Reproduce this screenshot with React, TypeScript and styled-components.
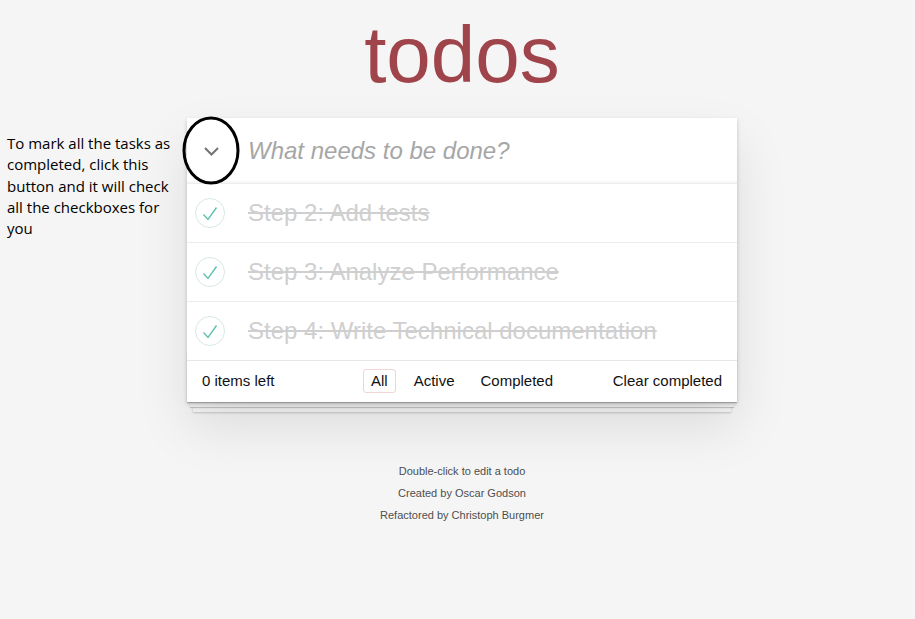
import React from 'react';
import styled, { createGlobalStyle } from 'styled-components';

const GlobalStyle = createGlobalStyle`
  body {
    margin: 0;
    background: #f5f5f5;
    color: #111111;
    font: 14px 'Liberation Sans', Arial, sans-serif;
  }
`;

const todos = [
  'Step 2: Add tests',
  'Step 3: Analyze Performance',
  'Step 4: Write Technical documentation',
];

const filters = ['All', 'Active', 'Completed'];

const Check = () => (
  <svg width="30" height="30" viewBox="0 0 30 30">
    <circle cx="15" cy="15" r="14.5" fill="none" stroke="#d6e8e4" strokeWidth="1" />
    <polyline points="8.5,16.5 13,21.5 21.5,9.5" fill="none" stroke="#5dc2af" strokeWidth="1.4" />
  </svg>
);

const App = () => {
  return (
    <Page>
      <GlobalStyle />
      <Hint>
        To mark all the tasks as completed, click this button and it will check all the
        checkboxes for you
      </Hint>
      <Main>
        <Title>todos</Title>
        <Card>
          <Header>
            <ToggleAll>
              <svg width="17" height="11" viewBox="0 0 17 11">
                <polyline points="2,2 8.5,8.5 15,2" fill="none" stroke="#737373" strokeWidth="2" />
              </svg>
            </ToggleAll>
            <NewTodo placeholder="What needs to be done?" />
            <Ring width="58" height="69" viewBox="0 0 58 69">
              <ellipse cx="29" cy="34.5" rx="27" ry="32.5" fill="none" stroke="#000" strokeWidth="3" />
            </Ring>
          </Header>
          <List>
            {todos.map((t) => (
              <Item key={t}>
                <CheckBox>
                  <Check />
                </CheckBox>
                <ItemText>{t}</ItemText>
              </Item>
            ))}
          </List>
          <Footer>
            <Count>0 items left</Count>
            <Filters>
              {filters.map((f) => (
                <Filter key={f} selected={f === 'All'}>
                  {f}
                </Filter>
              ))}
            </Filters>
            <Clear>Clear completed</Clear>
          </Footer>
        </Card>
        <Info>
          <p>Double-click to edit a todo</p>
          <p>Created by Oscar Godson</p>
          <p>Refactored by Christoph Burgmer</p>
        </Info>
      </Main>
    </Page>
  );
};

const Page = styled.div`
  display: flex;
  align-items: flex-start;
  padding-left: 7px;
`;

const Hint = styled.div`
  width: 172px;
  margin-top: 133px;
  font-family: 'Open Sans', 'Noto Sans', sans-serif;
  font-size: 15px;
  line-height: 21.3px;
  color: #000;
`;

const Main = styled.div`
  width: 550px;
  margin-left: 8px;
  display: flex;
  flex-direction: column;
`;

const Title = styled.h1`
  margin: 15px 0 23px;
  height: 80px;
  font-size: 80px;
  line-height: 80px;
  font-weight: 400;
  text-align: center;
  color: #a0444b;
`;

const Card = styled.section`
  background: #fff;
  position: relative;
  box-shadow: 0 2px 4px 0 rgba(0, 0, 0, 0.2), 0 25px 50px 0 rgba(0, 0, 0, 0.1);
`;

const Header = styled.header`
  position: relative;
  height: 65px;
  display: flex;
  align-items: center;
  box-shadow: inset 0 -2px 1px rgba(0, 0, 0, 0.03);
`;

const ToggleAll = styled.div`
  width: 48px;
  display: flex;
  justify-content: center;
  padding-top: 2px;
`;

const NewTodo = styled.input`
  flex: 1;
  border: none;
  outline: none;
  background: transparent;
  margin-left: 13px;
  padding: 0;
  font-family: 'Liberation Sans', Arial, sans-serif;
  font-size: 24px;
  color: #4d4d4d;

  &::placeholder {
    font-style: italic;
    color: #a6a6a6;
  }
`;

const Ring = styled.svg`
  position: absolute;
  left: -5px;
  top: -2px;
`;

const List = styled.ul`
  list-style: none;
  margin: 0;
  padding: 0;
`;

const Item = styled.li`
  height: 58px;
  display: flex;
  align-items: center;
  border-top: 1px solid #ededed;
`;

const CheckBox = styled.div`
  width: 30px;
  height: 30px;
  margin-left: 8px;
  margin-right: 23px;
  svg {
    display: block;
  }
`;

const ItemText = styled.span`
  font-size: 24px;
  color: #cfcfcf;
  text-decoration: line-through;
`;

const Footer = styled.footer`
  position: relative;
  display: grid;
  grid-template-columns: 1fr auto 1fr;
  align-items: center;
  height: 39px;
  padding: 0 15px 2px;
  border-top: 1px solid #e6e6e6;
  font-size: 15px;
  color: #111;

  &::before {
    content: '';
    position: absolute;
    right: 0;
    bottom: 0;
    left: 0;
    height: 50px;
    z-index: -1;
    box-shadow: 0 1px 1px rgba(0, 0, 0, 0.2), 0 8px 0 -3px #f6f6f6,
      0 9px 1px -3px rgba(0, 0, 0, 0.2), 0 16px 0 -6px #f6f6f6,
      0 17px 2px -6px rgba(0, 0, 0, 0.2);
  }
`;

const Count = styled.span`
  justify-self: start;
`;

const Filters = styled.ul`
  list-style: none;
  margin: 0;
  padding: 0;
  display: flex;
  gap: 10px;
`;

const Filter = styled.li<{ selected?: boolean }>`
  padding: 3px 7px;
  border-radius: 3px;
  border: 1px solid ${(p) => (p.selected ? 'rgba(175, 47, 47, 0.2)' : 'transparent')};
  line-height: 16px;
`;

const Clear = styled.span`
  justify-self: end;
`;

const Info = styled.footer`
  margin-top: 64px;
  display: flex;
  flex-direction: column;
  gap: 11px;
  text-align: center;
  font-size: 11px;
  color: #4d4d4d;
  text-shadow: 0 1px 0 rgba(255, 255, 255, 0.5);

  p {
    margin: 0;
    line-height: 11px;
  }
`;

export default App;
